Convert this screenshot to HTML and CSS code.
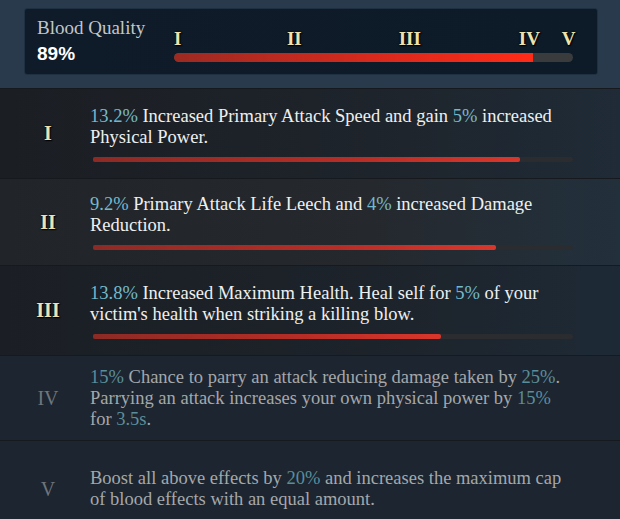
FILE: index.html
```html
<!DOCTYPE html>
<html lang="en">
  <head>
    <meta charset="UTF-8" />
    <meta name="viewport" content="width=device-width, initial-scale=1.0" />
    <title>Blood Quality</title>
    <link rel="stylesheet" href="styles.css">
  </head>
  <body>
    <div class="header">
      <div class="quality">
        <div class="quality-label">
          <span class="quality-title">Blood Quality</span>
          <span class="quality-value">89%</span>
        </div>
        <div class="quality-meter">
          <div class="tiers">
            <span class="tier" style="left: 0%">I</span>
            <span class="tier" style="left: 28.3%">II</span>
            <span class="tier" style="left: 56.3%">III</span>
            <span class="tier" style="left: 86.4%">IV</span>
            <span class="tier" style="left: 97.2%">V</span>
          </div>
          <div class="meter-track">
            <div class="meter-fill" style="width: 90%"></div>
          </div>
        </div>
      </div>
    </div>

    <div class="effects">
      <div class="effect row-1">
        <div class="numeral">I</div>
        <div class="effect-body">
          <p><span class="val">13.2%</span> Increased Primary Attack Speed and gain <span class="val">5%</span> increased<br>Physical Power.</p>
          <div class="bar"><div class="bar-fill" style="width: 89%"></div></div>
        </div>
      </div>
      <div class="effect row-2">
        <div class="numeral">II</div>
        <div class="effect-body">
          <p><span class="val">9.2%</span> Primary Attack Life Leech and <span class="val">4%</span> increased Damage<br>Reduction.</p>
          <div class="bar"><div class="bar-fill" style="width: 84%"></div></div>
        </div>
      </div>
      <div class="effect row-3">
        <div class="numeral">III</div>
        <div class="effect-body">
          <p><span class="val">13.8%</span> Increased Maximum Health. Heal self for <span class="val">5%</span> of your<br>victim's health when striking a killing blow.</p>
          <div class="bar"><div class="bar-fill" style="width: 72.5%"></div></div>
        </div>
      </div>
      <div class="effect row-4 locked">
        <div class="numeral">IV</div>
        <div class="effect-body">
          <p><span class="val">15%</span> Chance to parry an attack reducing damage taken by <span class="val">25%</span>.<br>Parrying an attack increases your own physical power by <span class="val">15%</span><br>for <span class="val">3.5s</span>.</p>
        </div>
      </div>
      <div class="effect row-5 locked">
        <div class="numeral">V</div>
        <div class="effect-body">
          <p>Boost all above effects by <span class="val">20%</span> and increases the maximum cap<br>of blood effects with an equal amount.</p>
        </div>
      </div>
    </div>
  </body>
</html>
```

FILE: styles.css
```css
body {
  margin: 0;
  background-color: #1c2530;
  font-family: "Liberation Serif", "DejaVu Serif", serif;
  color: #eef0f0;
  overflow: hidden;
}

/* top panel */
.header {
  background-color: #2a3a4d;
  padding: 8px 22px 13px 24px;
}

.quality {
  display: flex;
  align-items: center;
  height: 65px;
  padding: 0 24px 0 12px;
  background: linear-gradient(90deg, #0f1b28, #0d1a27);
  border: 1px solid #1f3043;
  border-radius: 3px;
}

.quality-label {
  display: flex;
  flex-direction: column;
  width: 137px;
}

.quality-title {
  font-size: 19px;
  line-height: 22px;
  color: #c3c6c8;
  margin-top: -1px;
}

.quality-value {
  font-family: "Liberation Sans", Arial, sans-serif;
  font-weight: bold;
  font-size: 19px;
  line-height: 22px;
  color: #ffffff;
  margin-top: 4px;
}

.quality-meter {
  flex: 1;
  padding-top: 6px;
}

.tiers {
  position: relative;
  height: 22px;
}

.tier {
  position: absolute;
  top: 0;
  font-weight: bold;
  font-size: 19px;
  color: #efe2ac;
  text-shadow: 0 0 2px #000, 1px 1px 1px #000;
  line-height: 22px;
}

.meter-track {
  height: 9px;
  border-radius: 5px;
  background-color: #3a3b3d;
  margin-top: 3px;
  overflow: hidden;
}

.meter-fill {
  height: 100%;
  border-radius: 5px 0 0 5px;
  background: linear-gradient(90deg, #9c2a22, #d8291d 55%, #ff2b17);
}

/* effect rows */
.effect {
  display: flex;
  align-items: center;
  border-top: 1px solid #16191d;
}

.row-1 {
  height: 89px;
  background: linear-gradient(90deg, #1b1e23, #1e242b 60%, #1f2b37);
}

.row-2 {
  height: 86px;
  background: linear-gradient(90deg, #212428, #25292e 60%, #22303c);
}

.row-3 {
  height: 89px;
  background: linear-gradient(90deg, #1b1f25, #1d232a 60%, #1d2a36);
}

.row-4 {
  height: 84px;
  background-color: #1d2530;
}

.row-5 {
  height: 96px;
  background-color: #1c2530;
}

.numeral {
  width: 84px;
  padding-left: 6px;
  text-align: center;
  font-weight: bold;
  font-size: 20px;
  color: #efe2ac;
  text-shadow: 0 0 2px #000, 1px 1px 1px #000;
}

.effect-body {
  width: 486px;
}

.effect-body p {
  margin: 0;
  font-size: 18.5px;
  line-height: 21px;
}

.val {
  color: #74b9cb;
}

.bar {
  height: 5px;
  margin: 9px 3px 0 3px;
  background-color: #2a2c30;
  border-radius: 2px;
}

.bar-fill {
  height: 100%;
  border-radius: 2px;
  background: linear-gradient(90deg, #8d2a25, #b62d26 60%, #d9362b);
}

.locked .numeral {
  color: #6f757c;
  font-weight: normal;
  text-shadow: none;
}

.locked .effect-body p {
  color: #a4a8ab;
}

.locked .val {
  color: #5a8e9b;
}
```
